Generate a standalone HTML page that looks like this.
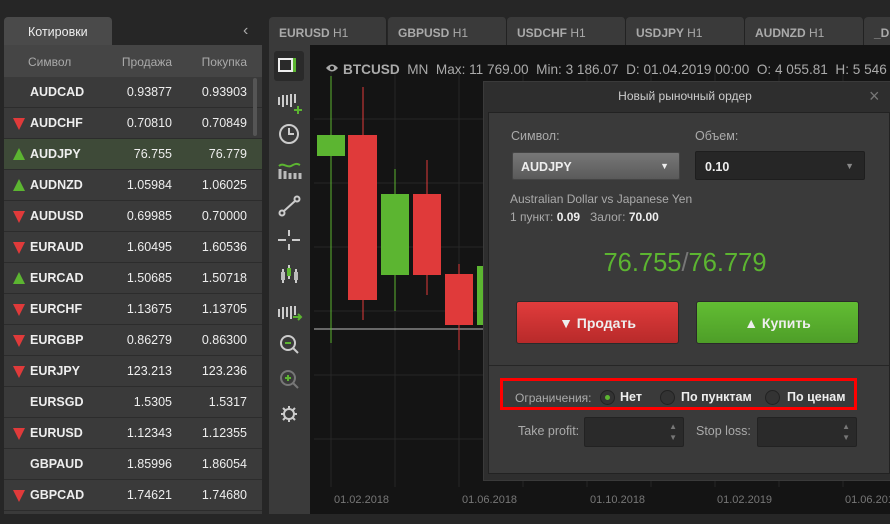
<!DOCTYPE html><html><head><meta charset="utf-8"><style>
*{box-sizing:border-box;margin:0;padding:0}
body{width:890px;height:524px;background:#262626;font-family:"Liberation Sans",sans-serif;position:relative;overflow:hidden;color:#eee}
.a{position:absolute}
.row{position:absolute;left:4px;width:258px;height:31px;background:#3a3a3a;border-bottom:1px solid #2c2c2c;font-size:12.5px;font-weight:bold}
.row span{position:absolute;top:8px}
.s{left:26px}.p{right:90px;font-weight:normal}.b{right:15px;font-weight:normal}
.dn{position:absolute;left:9px;top:10px;width:0;height:0;border-left:6px solid transparent;border-right:6px solid transparent;border-top:12px solid #e03a3a}
.up{position:absolute;left:9px;top:9px;width:0;height:0;border-left:6px solid transparent;border-right:6px solid transparent;border-bottom:12px solid #5cb531}
.tab{position:absolute;top:17px;height:28px;background:#3a3a3a;border-radius:4px 4px 0 0;color:#aaa;font-size:12px;padding:9px 10px;font-weight:bold;border-right:1px solid #222}
.tab i{font-style:normal;font-weight:normal}
.lbl{color:#aaa;font-size:12px}
</style></head><body>
<div class="a" style="left:4px;top:17px;width:108px;height:29px;background:#4a4a4a;border-radius:4px 4px 0 0;font-size:12.5px;padding:8px 0 0 24px;color:#eee">Котировки</div>
<div class="a" style="left:243px;top:22px;color:#aaa;font-size:16px">‹</div>
<div class="a" style="left:4px;top:45px;width:258px;height:32px;background:#454545;font-size:12px;color:#aaa">
<span class="a" style="left:24px;top:10px">Символ</span><span class="a" style="right:90px;top:10px">Продажа</span><span class="a" style="right:15px;top:10px">Покупка</span></div>
<div class="a" style="left:4px;top:77px;width:258px;height:437px;background:#3a3a3a"></div>
<div class="row" style="top:77px"><span class="s">AUDCAD</span><span class="p">0.93877</span><span class="b">0.93903</span></div>
<div class="row" style="top:108px"><div class="dn"></div><span class="s">AUDCHF</span><span class="p">0.70810</span><span class="b">0.70849</span></div>
<div class="row" style="top:139px;background:#3e4a38"><div class="up"></div><span class="s">AUDJPY</span><span class="p">76.755</span><span class="b">76.779</span></div>
<div class="row" style="top:170px"><div class="up"></div><span class="s">AUDNZD</span><span class="p">1.05984</span><span class="b">1.06025</span></div>
<div class="row" style="top:201px"><div class="dn"></div><span class="s">AUDUSD</span><span class="p">0.69985</span><span class="b">0.70000</span></div>
<div class="row" style="top:232px"><div class="dn"></div><span class="s">EURAUD</span><span class="p">1.60495</span><span class="b">1.60536</span></div>
<div class="row" style="top:263px"><div class="up"></div><span class="s">EURCAD</span><span class="p">1.50685</span><span class="b">1.50718</span></div>
<div class="row" style="top:294px"><div class="dn"></div><span class="s">EURCHF</span><span class="p">1.13675</span><span class="b">1.13705</span></div>
<div class="row" style="top:325px"><div class="dn"></div><span class="s">EURGBP</span><span class="p">0.86279</span><span class="b">0.86300</span></div>
<div class="row" style="top:356px"><div class="dn"></div><span class="s">EURJPY</span><span class="p">123.213</span><span class="b">123.236</span></div>
<div class="row" style="top:387px"><span class="s">EURSGD</span><span class="p">1.5305</span><span class="b">1.5317</span></div>
<div class="row" style="top:418px"><div class="dn"></div><span class="s">EURUSD</span><span class="p">1.12343</span><span class="b">1.12355</span></div>
<div class="row" style="top:449px"><span class="s">GBPAUD</span><span class="p">1.85996</span><span class="b">1.86054</span></div>
<div class="row" style="top:480px"><div class="dn"></div><span class="s">GBPCAD</span><span class="p">1.74621</span><span class="b">1.74680</span></div>
<div class="a" style="left:253px;top:78px;width:4px;height:58px;background:#555;border-radius:2px"></div>
<div class="tab" style="left:269px;width:118px">EURUSD <i>H1</i></div>
<div class="tab" style="left:388px;width:119px">GBPUSD <i>H1</i></div>
<div class="tab" style="left:507px;width:119px">USDCHF <i>H1</i></div>
<div class="tab" style="left:626px;width:119px">USDJPY <i>H1</i></div>
<div class="tab" style="left:745px;width:119px">AUDNZD <i>H1</i></div>
<div class="tab" style="left:864px;width:40px">_DI</div>
<div class="a" style="left:269px;top:45px;width:41px;height:469px;background:#3a3a3a"></div>
<div class="a" style="left:274px;top:51px;width:30px;height:30px;background:#2a2a2a;border-radius:3px"></div>
<svg class="a" style="left:269px;top:45px" width="41" height="400" fill="none" stroke="#ccc" stroke-width="2">
<rect x="10" y="14" width="13" height="12" stroke="#eee"/><rect x="24" y="13" width="3" height="14" fill="#5cb531" stroke="none"/>
<path d="M10 60v-8M14 62v-12M18 60v-10M22 62v-13M26 58v-9"/><path d="M25 65h8M29 61v8" stroke="#5cb531"/>
<circle cx="20" cy="89" r="9"/><path d="M20 83v6h5"/>
<path d="M10 121c4-4 8 2 12 0s5-3 9-1" stroke="#5cb531"/><path d="M11 124v10M16 126v8M21 128v6M26 128v6M31 128v6" stroke="#bbb" stroke-width="3"/>
<circle cx="13" cy="168" r="2.5"/><circle cx="28" cy="154" r="2.5"/><path d="M15 166l11-10"/>
<path d="M9 195h8M23 195h8M20 185v6M20 199v6"/>
<path d="M14 224v14M20 220v14M27 224v14"/><rect x="12" y="227" width="4" height="8" fill="#bbb" stroke="none"/><rect x="18" y="223" width="4" height="8" fill="#5cb531" stroke="none"/><rect x="25" y="227" width="4" height="8" fill="#bbb" stroke="none"/>
<path d="M10 272v-8M14 274v-12M18 272v-10M22 274v-13M26 270v-9"/><path d="M24 272h8M29 269l3 3-3 3" stroke="#5cb531"/>
<circle cx="19" cy="298" r="7"/><path d="M24 303l5 5M16 298h6"/><path d="M16 298h6" stroke="#5cb531"/>
<circle cx="19" cy="333" r="7" stroke="#777"/><path d="M24 338l5 5" stroke="#777"/><path d="M16 333h6M19 330v6" stroke="#5cb531"/>
<circle cx="20" cy="369" r="5"/><path d="M20 361v3M20 374v3M12 369h3M25 369h3M14 363l2 2M24 373l2 2M14 375l2-2M24 365l2-2"/>
</svg>
<div class="a" style="left:310px;top:45px;width:580px;height:469px;background:#141414"></div>
<svg class="a" style="left:310px;top:45px" width="580" height="469">
<g stroke="#262626" stroke-width="1"><path d="M4 74h570M4 138h570M4 202h570M4 266h570M4 330h570M4 394h570"/><path d="M21 25v411M85 25v411M149 25v411M213 25v411M277 25v411M341 25v411M405 25v411M469 25v411M533 25v411"/>
<path d="M21 436v6M85 436v6M149 436v6M213 436v6M277 436v6M341 436v6M405 436v6M469 436v6M533 436v6"/></g>
<path d="M4 284h170" stroke="#bbb"/>
<path d="M21 31v267" stroke="#5cb531"/><rect x="7" y="90" width="28" height="21" fill="#5cb531"/>
<path d="M53 42v233" stroke="#e03a3a"/><rect x="38" y="90" width="29" height="165" fill="#e03a3a"/>
<path d="M85 124v142" stroke="#5cb531"/><rect x="71" y="149" width="28" height="81" fill="#5cb531"/>
<path d="M117 115v135" stroke="#e03a3a"/><rect x="103" y="149" width="28" height="81" fill="#e03a3a"/>
<path d="M149 219v86" stroke="#e03a3a"/><rect x="135" y="229" width="28" height="51" fill="#e03a3a"/>
<rect x="167" y="221" width="6" height="59" fill="#5cb531"/>
</svg>
<svg class="a" style="left:325px;top:63px" width="14" height="10"><path d="M1 5q6-7 12 0q-6 7-12 0z" fill="#aaa"/><circle cx="7" cy="5" r="2" fill="#141414"/></svg>
<div class="a" style="left:343px;top:62px;font-size:13.6px;color:#aaa;white-space:nowrap"><b>BTCUSD</b>&nbsp;&nbsp;MN&nbsp;&nbsp;Max: 11 769.00&nbsp;&nbsp;Min: 3 186.07&nbsp;&nbsp;D: 01.04.2019 00:00&nbsp;&nbsp;O: 4 055.81&nbsp;&nbsp;H: 5 546</div>
<div class="a" style="top:494px;left:334px;font-size:11px;color:#777;white-space:nowrap">01.02.2018</div>
<div class="a" style="top:494px;left:462px;font-size:11px;color:#777">01.06.2018</div>
<div class="a" style="top:494px;left:590px;font-size:11px;color:#777">01.10.2018</div>
<div class="a" style="top:494px;left:717px;font-size:11px;color:#777">01.02.2019</div>
<div class="a" style="top:494px;left:845px;font-size:11px;color:#777;white-space:nowrap">01.06.2019</div>
<div class="a" style="left:483px;top:81px;width:410px;height:400px;background:#2e2e2e;border:1px solid #3a3a3a"></div>
<div class="a" style="left:483px;top:89px;width:404px;text-align:center;font-size:12px;color:#ccc">Новый рыночный ордер</div>
<div class="a" style="left:869px;top:86px;font-size:18px;color:#777">×</div>
<div class="a" style="left:488px;top:112px;width:402px;height:362px;background:#3a3a3a;border:1px solid #222"></div>
<div class="a lbl" style="left:511px;top:129px;font-size:12.5px">Символ:</div>
<div class="a lbl" style="left:695px;top:129px;font-size:12.5px">Объем:</div>
<div class="a" style="left:512px;top:152px;width:168px;height:28px;background:linear-gradient(#777,#5a5a5a);border:1px solid #444;border-radius:2px;font-size:12.5px;font-weight:bold;padding:7px 8px">AUDJPY<span style="position:absolute;right:10px;top:8px;font-size:9px">▼</span></div>
<div class="a" style="left:695px;top:151px;width:170px;height:29px;background:#262626;border:1px solid #1e1e1e;border-radius:2px;font-size:12.5px;font-weight:bold;padding:8px 9px">0.10<span style="position:absolute;right:10px;top:9px;font-size:9px;color:#888">▼</span></div>
<div class="a lbl" style="left:510px;top:192px">Australian Dollar vs Japanese Yen</div>
<div class="a lbl" style="left:510px;top:210px">1 пункт: <b style="color:#eee">0.09</b>&nbsp;&nbsp; Залог: <b style="color:#eee">70.00</b></div>
<div class="a" style="left:490px;top:249px;width:390px;text-align:center;font-size:25.5px;color:#5cb531">76.755<span style="color:#777">/</span>76.779</div>
<div class="a" style="left:516px;top:301px;width:163px;height:43px;background:linear-gradient(#e03c3c,#b82a2a);border:1px solid #2a2a2a;border-radius:3px;text-align:center;font-size:14px;font-weight:bold;padding-top:13px">▼ Продать</div>
<div class="a" style="left:696px;top:301px;width:163px;height:43px;background:linear-gradient(#62bd33,#4e9e28);border:1px solid #2a2a2a;border-radius:3px;text-align:center;font-size:14px;font-weight:bold;padding-top:13px">▲ Купить</div>
<div class="a" style="left:489px;top:365px;width:400px;height:1px;background:#262626"></div>
<div class="a" style="left:500px;top:378px;width:357px;height:32px;border:3px solid #f00"></div>
<div class="a lbl" style="left:515px;top:391px">Ограничения:</div>
<div class="a" style="left:600px;top:390px;width:15px;height:15px;border-radius:50%;border:1px solid #222;background:#333"><div style="width:5px;height:5px;background:#5cb531;border-radius:50%;margin:4px"></div></div>
<div class="a" style="left:620px;top:390px;font-size:12.5px;font-weight:bold">Нет</div>
<div class="a" style="left:660px;top:390px;width:15px;height:15px;border-radius:50%;border:1px solid #222;background:#333"></div>
<div class="a" style="left:681px;top:390px;font-size:12.5px;font-weight:bold">По пунктам</div>
<div class="a" style="left:765px;top:390px;width:15px;height:15px;border-radius:50%;border:1px solid #222;background:#333"></div>
<div class="a" style="left:787px;top:390px;font-size:12.5px;font-weight:bold">По ценам</div>
<div class="a lbl" style="left:518px;top:424px;font-size:12.5px">Take profit:</div>
<div class="a" style="left:584px;top:417px;width:100px;height:30px;background:#2a2a2a;border:1px solid #222;border-radius:2px"><span style="position:absolute;right:6px;top:3px;font-size:8px;color:#777;line-height:11px">▲<br>▼</span></div>
<div class="a lbl" style="left:696px;top:424px;font-size:12.5px">Stop loss:</div>
<div class="a" style="left:757px;top:417px;width:100px;height:30px;background:#2a2a2a;border:1px solid #222;border-radius:2px"><span style="position:absolute;right:6px;top:3px;font-size:8px;color:#777;line-height:11px">▲<br>▼</span></div>
</body></html>
